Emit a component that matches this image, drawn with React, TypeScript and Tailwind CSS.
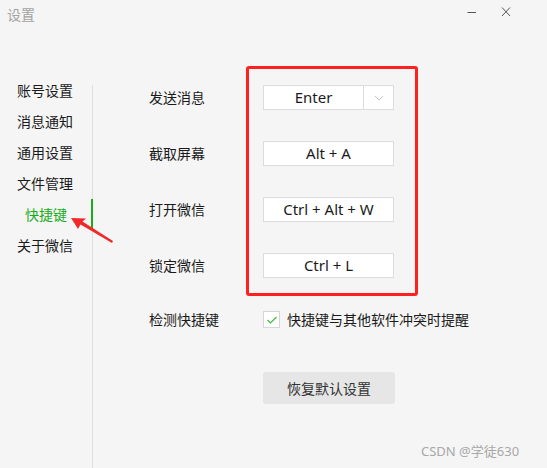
import React from "react";

const font = { fontFamily: '"Noto Sans", "Noto Sans CJK SC", sans-serif' };

const navItems = ["账号设置", "消息通知", "通用设置", "文件管理", "快捷键", "关于微信"];

const rows: { label: string; value: string; dropdown?: boolean }[] = [
  { label: "发送消息", value: "Enter", dropdown: true },
  { label: "截取屏幕", value: "Alt + A" },
  { label: "打开微信", value: "Ctrl + Alt + W" },
  { label: "锁定微信", value: "Ctrl + L" },
];

export default function App() {
  return (
    <div
      className="relative w-[547px] h-[468px] bg-[#f5f5f5] text-[#1a1a1a] overflow-hidden flex flex-col"
      style={font}
    >
      {/* title bar */}
      <div className="h-[75px] flex items-start justify-between shrink-0">
        <div className="pl-[7px] pt-[5px] text-[14px] leading-[20px] text-[#a3a3a3]">设置</div>
        <div className="flex items-start pt-[7px] pr-[36px] gap-[24px]">
          <svg width="10" height="10" viewBox="0 0 10 10">
            <line x1="0.5" y1="5.5" x2="9" y2="5.5" stroke="#555" strokeWidth="1" />
          </svg>
          <svg width="10" height="10" viewBox="0 0 10 10">
            <line x1="1" y1="0.5" x2="9" y2="9" stroke="#555" strokeWidth="1" />
            <line x1="9" y1="0.5" x2="1" y2="9" stroke="#555" strokeWidth="1" />
          </svg>
        </div>
      </div>

      {/* body */}
      <div className="flex flex-1">
        {/* sidebar */}
        <div className="w-[92px] flex flex-col shrink-0">
          {navItems.map((t) => {
            const active = t === "快捷键";
            return (
              <div
                key={t}
                className={
                  "relative h-[31px] flex items-center text-[14px] " +
                  (active ? "pl-[25px] text-[#1aad19]" : "pl-[17px]")
                }
              >
                {t}
                {active && (
                  <span className="absolute right-[-1px] top-0 h-[31px] w-[2px] bg-[#1aad19]" />
                )}
              </div>
            );
          })}
        </div>
        <div className="w-px mt-[10px] bg-[#e0e0e0] shrink-0" />

        {/* content */}
        <div className="flex flex-col pl-[56px] pt-[10px]">
          <div className="flex flex-col gap-[31px]">
            {rows.map((r) => (
              <div key={r.label} className="flex items-center">
                <div className="w-[114px] text-[14px]">{r.label}</div>
                <div className="w-[131px] h-[25px] bg-white border border-[#dcdcdc] flex items-stretch">
                  <div className="flex-1 flex items-center justify-center text-[15px]">{r.value}</div>
                  {r.dropdown && (
                    <div className="w-[30px] border-l border-[#dcdcdc] flex items-center justify-center">
                      <svg width="10" height="6" viewBox="0 0 10 6">
                        <polyline points="1,1 5,5 9,1" fill="none" stroke="#c8c8c8" strokeWidth="1" />
                      </svg>
                    </div>
                  )}
                </div>
              </div>
            ))}
          </div>

          <div className="flex items-center mt-[31px]">
            <div className="w-[114px] text-[14px]">检测快捷键</div>
            <div className="w-[17px] h-[17px] bg-white border border-[#d6d6d6] flex items-center justify-center">
              <svg width="12" height="10" viewBox="0 0 12 10">
                <polyline points="1.5,5 4.5,8 10.5,2" fill="none" stroke="#3cbf3c" strokeWidth="1.2" />
              </svg>
            </div>
            <div className="ml-[7px] text-[14px]">快捷键与其他软件冲突时提醒</div>
          </div>

          <div className="mt-[42px] ml-[114px] w-[132px] h-[32px] rounded-[3px] bg-[#e6e6e6] flex items-center justify-center text-[14px] text-[#333]">
            恢复默认设置
          </div>
        </div>
      </div>

      {/* red annotation box */}
      <div className="absolute left-[246px] top-[66px] w-[172px] h-[230px] border-[3px] border-[#ff2020] rounded-[3px]" />

      {/* red arrow */}
      <svg className="absolute left-0 top-0" width="547" height="468" viewBox="0 0 547 468">
        <polygon
          points="71,218 86,218.5 82.5,221.5 113,241 112,243 80.5,224.5 78,229"
          fill="#f02a2a"
        />
      </svg>

      {/* watermark */}
      <div className="absolute left-[421px] top-[442px] text-[13px] leading-[18px] text-[#a8a8a8]">
        CSDN @学徒630
      </div>
    </div>
  );
}
